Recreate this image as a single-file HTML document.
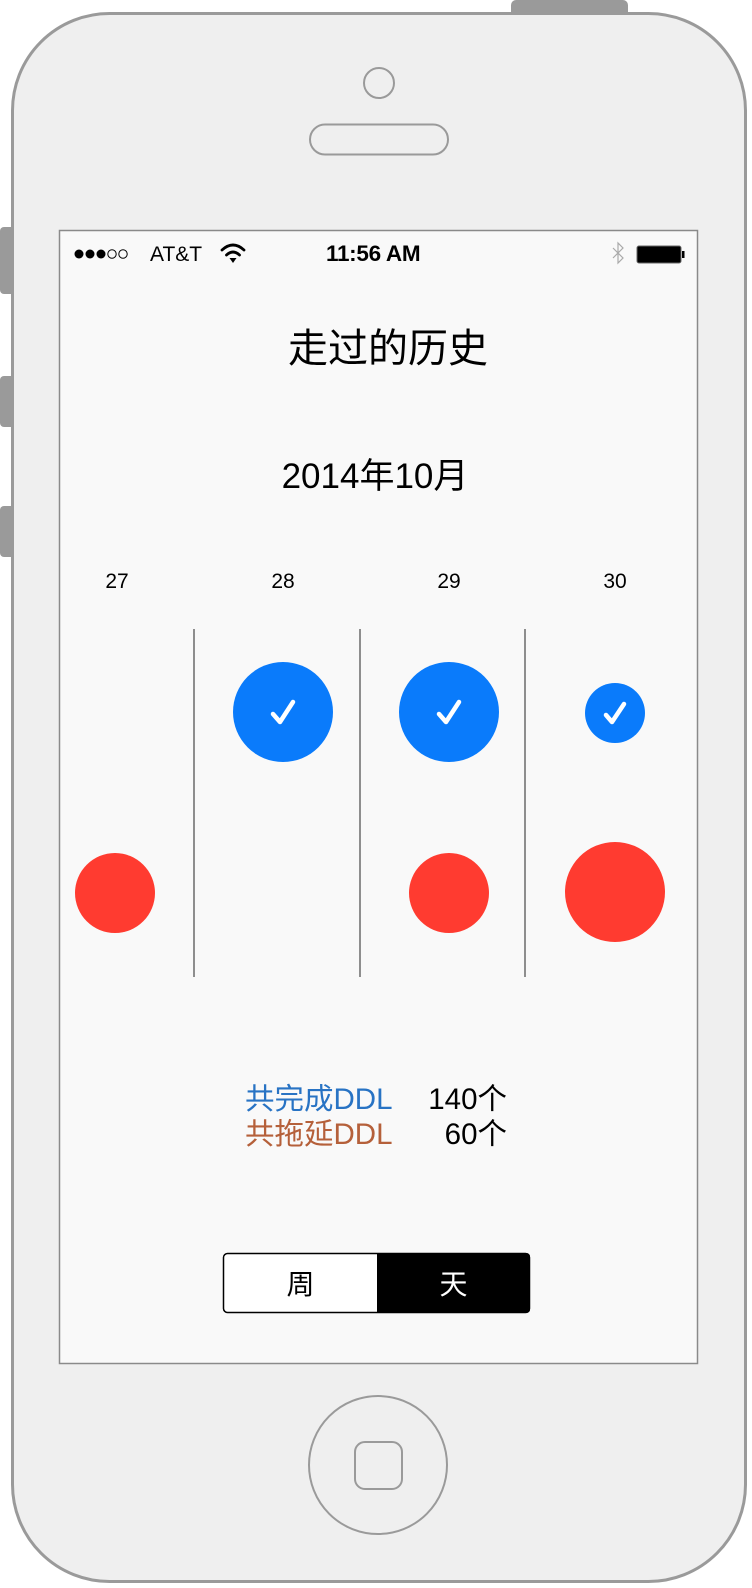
<!DOCTYPE html>
<html><head><meta charset="utf-8"><style>
html,body{margin:0;padding:0;background:#fff;}
body{width:752px;height:1588px;position:relative;overflow:hidden;font-family:"Liberation Sans","Noto Sans CJK SC",sans-serif;}
.t{position:absolute;white-space:nowrap;}
</style></head><body>
<svg width="752" height="1588" style="position:absolute;left:0;top:0">
  <rect x="511" y="0" width="117" height="20" rx="5" fill="#9a9a9a"/>
  <rect x="0" y="227" width="16" height="67" rx="4" fill="#9a9a9a"/>
  <rect x="0" y="376" width="16" height="51" rx="4" fill="#9a9a9a"/>
  <rect x="0" y="506" width="16" height="51" rx="4" fill="#9a9a9a"/>
  <rect x="12.5" y="13.5" width="733" height="1568" rx="97" fill="#efefef" stroke="#9a9a9a" stroke-width="3"/>
  <circle cx="379" cy="83" r="15" fill="none" stroke="#9a9a9a" stroke-width="2"/>
  <rect x="310" y="124.5" width="138" height="30" rx="15" fill="none" stroke="#9a9a9a" stroke-width="2"/>
  <rect x="59.5" y="230.5" width="638" height="1133" fill="#f9f9f9" stroke="#8a8a8a" stroke-width="1.5"/>
  <circle cx="378" cy="1465" r="69" fill="none" stroke="#9a9a9a" stroke-width="2"/>
  <rect x="355" y="1442" width="47" height="47" rx="10" fill="none" stroke="#9a9a9a" stroke-width="2"/>
  <!-- status bar -->
  <g fill="#000"><circle cx="79" cy="254" r="4.5"/><circle cx="90" cy="254" r="4.5"/><circle cx="101" cy="254" r="4.5"/></g>
  <g fill="none" stroke="#000" stroke-width="1"><circle cx="112" cy="254" r="4.2"/><circle cx="123" cy="254" r="4.2"/></g>
  <g fill="none" stroke="#000" stroke-width="2.8" stroke-linecap="round">
    <path d="M222 250 Q233 240 244 250"/><path d="M226.5 255 Q233 249 239.5 255"/>
  </g>
  <path d="M229.5 258 L236.5 258 L233 263 Z" fill="#000"/>
  <path d="M613 248 L623 258 L618 263 L618 243 L623 248 L613 258" fill="none" stroke="#aaa" stroke-width="1.2"/>
  <rect x="637" y="246" width="44" height="17" rx="2" fill="#000" stroke="#666" stroke-width="1"/>
  <rect x="682" y="251" width="2.5" height="7" fill="#000"/>
  <!-- columns -->
  <g stroke="#6a6a6a" stroke-width="1.5"><line x1="194" y1="629" x2="194" y2="977"/><line x1="360" y1="629" x2="360" y2="977"/><line x1="525" y1="629" x2="525" y2="977"/></g>
  <g fill="#0a7bfb"><circle cx="283" cy="712" r="50"/><circle cx="449" cy="712" r="50"/><circle cx="615" cy="713" r="30"/></g>
  <g fill="none" stroke="#fff" stroke-width="4.5" stroke-linecap="round" stroke-linejoin="round">
    <path d="M273 714 L280 722 L293 702"/><path d="M439 714 L446 722 L459 702"/><path d="M606 715 L612 722 L624 704"/>
  </g>
  <g fill="#ff3b30"><circle cx="115" cy="893" r="40"/><circle cx="449" cy="893" r="40"/><circle cx="615" cy="892" r="50"/></g>
  <!-- segment -->
  <rect x="223.5" y="1253.5" width="306" height="59" rx="4" fill="#fff" stroke="#000" stroke-width="1.5"/>
  <path d="M377 1253 L526 1253 Q530 1253 530 1257 L530 1309 Q530 1313 526 1313 L377 1313 Z" fill="#000"/>
</svg>
<div class="t" style="left:150px;top:243px;font-size:21px;">AT&amp;T</div>
<div class="t" style="left:326px;top:241px;font-size:22.5px;font-weight:bold;letter-spacing:-0.3px">11:56 AM</div>
<div class="t" style="left:0;width:776px;text-align:center;top:316px;font-size:40px;">走过的历史</div>
<div class="t" style="left:0;width:750px;text-align:center;top:448px;font-size:35px;">2014年10月</div>
<div class="t" style="left:87px;width:60px;text-align:center;top:570px;font-size:21px;">27</div>
<div class="t" style="left:253px;width:60px;text-align:center;top:570px;font-size:21px;">28</div>
<div class="t" style="left:419px;width:60px;text-align:center;top:570px;font-size:21px;">29</div>
<div class="t" style="left:585px;width:60px;text-align:center;top:570px;font-size:21px;">30</div>
<div class="t" style="left:245px;top:1076px;font-size:29.5px;color:#2873c4">共完成DDL</div>
<div class="t" style="left:245px;top:1111px;font-size:29.5px;color:#b5603a">共拖延DDL</div>
<div class="t" style="left:400px;width:107px;text-align:right;top:1076px;font-size:29.5px;">140个</div>
<div class="t" style="left:400px;width:107px;text-align:right;top:1111px;font-size:29.5px;">60个</div>
<div class="t" style="left:224px;width:153px;text-align:center;top:1263px;font-size:28px;">周</div>
<div class="t" style="left:377px;width:153px;text-align:center;top:1263px;font-size:28px;color:#fff">天</div>
</body></html>
